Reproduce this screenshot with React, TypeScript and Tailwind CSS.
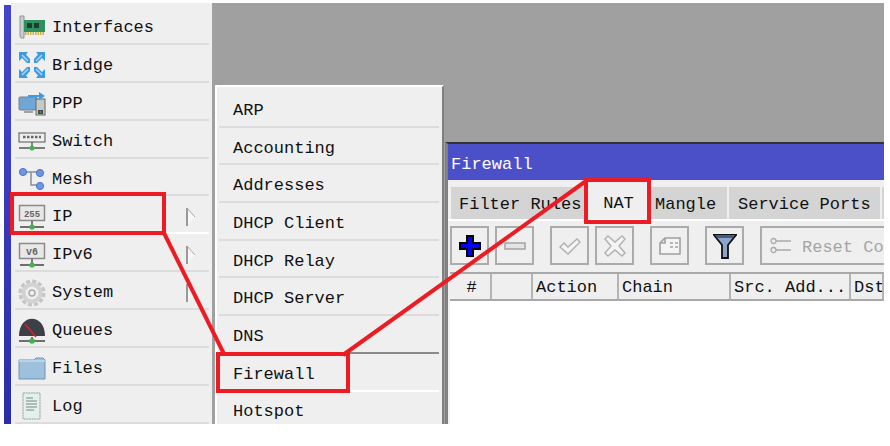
function ScreenIcon({ label, size = 9 }: { label: string; size?: number }) {
  return (
    <svg width="28" height="28" viewBox="0 0 28 28">
      <rect x="1.5" y="2.5" width="25" height="15" fill="#e8e8e8" stroke="#8a8a8a" strokeWidth="1.5" />
      <text x="14" y="14" textAnchor="middle" fontSize={size} fontFamily="Liberation Mono" fontWeight="bold" fill="#666">
        {label}
      </text>
      <path d="M14 18v5" stroke="#555" strokeWidth="1.5" />
      <path d="M2 24h24" stroke="#444" strokeWidth="1.5" />
      <circle cx="14" cy="24" r="2.6" fill="#3fb54a" />
    </svg>
  )
}

function InterfacesIcon() {
  return (
    <svg width="28" height="28" viewBox="0 0 28 28">
      <path d="M2 3h4v22H3l-1-2z" fill="#c9cfcf" stroke="#8f9696" />
      <rect x="6" y="7" width="21" height="12" fill="#2f8f5f" />
      <rect x="9" y="10" width="5" height="5" fill="#173f2c" />
      <rect x="16" y="10" width="5" height="5" fill="#173f2c" />
      <path d="M7 20.5h19" stroke="#c9b24a" strokeWidth="3" strokeDasharray="1.5 1" />
    </svg>
  )
}

function BridgeIcon() {
  return (
    <svg width="28" height="28" viewBox="0 0 28 28">
      <g fill="#3c9be3">
        <path d="M1 1h9L8 3.5 12 8v4H9L4 7 1 10z" />
        <path d="M27 1h-9l2 2.5L16 8v4h3l5-5 3 3z" />
        <path d="M1 27h9l-2-2.5 4-4.5v-4H9l-5 5-3-3z" />
        <path d="M27 27h-9l2-2.5-4-4.5v-4h3l5 5 3-3z" />
      </g>
      <g stroke="#a9d6f5" strokeWidth="1.5">
        <path d="M4 4l6 6M24 4l-6 6M4 24l6-6M24 24l-6-6" />
      </g>
    </svg>
  )
}

function PppIcon() {
  return (
    <svg width="28" height="28" viewBox="0 0 28 28">
      <rect x="1" y="8" width="18" height="13" rx="1" fill="#6ea6d6" stroke="#77838c" />
      <path d="M6 22h9v2H6z" fill="#9aa3a8" />
      <rect x="18" y="10" width="9" height="16" fill="#c5c9c9" stroke="#666" />
      <rect x="20" y="21" width="5" height="4" fill="#444" />
      <circle cx="22.5" cy="23" r="1" fill="#4caf50" />
      <path d="M10 6h11V3l6 4-6 4V8H10z" fill="#3c9be3" />
    </svg>
  )
}

function SwitchIcon() {
  return (
    <svg width="28" height="28" viewBox="0 0 28 28">
      <rect x="1" y="6" width="26" height="9" fill="#efefef" stroke="#777" strokeWidth="1.3" />
      <path d="M5 10h18" stroke="#666" strokeWidth="2.5" strokeDasharray="2.5 1.5" />
      <path d="M14 15v6" stroke="#666" strokeWidth="1.5" />
      <path d="M1 21h26" stroke="#555" strokeWidth="1.5" />
      <circle cx="14" cy="21" r="2.5" fill="#3fb54a" />
    </svg>
  )
}

function MeshIcon() {
  return (
    <svg width="28" height="28" viewBox="0 0 28 28">
      <path d="M5 7h8v13h10M13 7h10" stroke="#8a8f94" strokeWidth="1.5" fill="none" />
      <circle cx="5" cy="7" r="3.6" fill="#7195e4" stroke="#4f74cc" />
      <circle cx="22" cy="8" r="3.6" fill="#7195e4" stroke="#4f74cc" />
      <circle cx="22" cy="21" r="3.6" fill="#7195e4" stroke="#4f74cc" />
    </svg>
  )
}

function SystemIcon() {
  return (
    <svg width="28" height="28" viewBox="0 0 28 28">
      <circle cx="14" cy="14" r="11.5" fill="none" stroke="#c6c6c6" strokeWidth="4" strokeDasharray="4 2" />
      <circle cx="14" cy="14" r="8.5" fill="none" stroke="#d2d2d2" strokeWidth="4" />
      <circle cx="14" cy="14" r="3" fill="#efefef" stroke="#aaa" strokeWidth="1.5" />
    </svg>
  )
}

function QueuesIcon() {
  return (
    <svg width="28" height="28" viewBox="0 0 28 28">
      <path d="M1 19C1 -4 27 -4 27 19z" fill="#3c4148" />
      <path d="M7 7l11 13" stroke="#e11d2a" strokeWidth="1.5" />
      <path d="M14 20v4" stroke="#444" strokeWidth="1.5" />
      <path d="M1 24h26" stroke="#444" strokeWidth="1.5" />
      <circle cx="14" cy="24" r="2.8" fill="#3fb54a" />
    </svg>
  )
}

function FilesIcon() {
  return (
    <svg width="28" height="28" viewBox="0 0 28 28">
      <path d="M1 6h15l2-2h7l2 2v19H1z" fill="#9dc0dc" stroke="#6d95b5" />
      <path d="M1 7h26" stroke="#c4dcec" strokeWidth="1.5" />
    </svg>
  )
}

function LogIcon() {
  return (
    <svg width="28" height="28" viewBox="0 0 28 28">
      <rect x="5" y="1" width="17" height="26" fill="#e4f0ec" stroke="#8fa39c" strokeDasharray="2 0.6" />
      <path d="M8 6h7M8 9h11M8 12h11M8 15h11M8 18h8" stroke="#9aaaa5" strokeWidth="1.5" />
    </svg>
  )
}

const sideItems = [
  { label: "Interfaces", icon: <InterfacesIcon /> },
  { label: "Bridge", icon: <BridgeIcon /> },
  { label: "PPP", icon: <PppIcon /> },
  { label: "Switch", icon: <SwitchIcon /> },
  { label: "Mesh", icon: <MeshIcon /> },
  { label: "IP", icon: <ScreenIcon label="255" />, arrow: true, active: true },
  { label: "IPv6", icon: <ScreenIcon label="v6" size={10} />, arrow: true },
  { label: "System", icon: <SystemIcon />, arrow: true },
  { label: "Queues", icon: <QueuesIcon /> },
  { label: "Files", icon: <FilesIcon /> },
  { label: "Log", icon: <LogIcon /> },
]

const subItems = ["ARP", "Accounting", "Addresses", "DHCP Client", "DHCP Relay", "DHCP Server", "DNS", "Firewall", "Hotspot"]

function Arrow() {
  return (
    <svg width="12" height="20" viewBox="0 0 12 20" className="ml-auto mr-[12px]">
      <path d="M2 1v18l8-9z" fill="#f7f7f7" />
      <path d="M2 1v18" stroke="#999" strokeWidth="2" />
      <path d="M2 1l8 9" stroke="#aaa" strokeWidth="1" />
    </svg>
  )
}

function Sidebar() {
  return (
    <div className="flex h-full w-[208px] shrink-0">
      <div className="mt-[2px] w-[7px] bg-gradient-to-b from-[#4444cc] to-[#2c2ca8]" />
      <div className="flex-1 bg-[#efefef] pt-[4px] pl-[4px] pr-[3px]">
        {sideItems.map((item) => (
          <div
            key={item.label}
            className={`flex h-[37.9px] items-center border-b-2 pt-[5px] ${item.active ? "border-[#ffffff]" : "border-[#dcdcdc]"}`}
          >
            <div className="ml-[3px] mr-[6px] flex w-[28px] justify-center">{item.icon}</div>
            <span>{item.label}</span>
            {item.arrow && <Arrow />}
          </div>
        ))}
      </div>
    </div>
  )
}

function SubMenu() {
  return (
    <div className="absolute left-[3px] top-[82px] bottom-0 w-[229px] overflow-hidden border-l-2 border-t-2 border-r-2 border-l-white border-t-white border-r-[#808080] bg-[#efefef] pl-[2px] pr-[3px] pt-[3px]">
      {subItems.map((item) => (
        <div
          key={item}
          className={`flex h-[37.7px] shrink-0 items-center border-b-2 pl-[14px] pt-[5px] ${
            item === "Firewall" ? "border-white" : item === "DNS" ? "border-[#8a8a8a]" : "border-[#dcdcdc]"
          }`}
        >
          {item}
        </div>
      ))}
    </div>
  )
}

function ToolButton({ children, className = "" }: { children: React.ReactNode; className?: string }) {
  return (
    <div className={`flex h-[39px] w-[39px] shrink-0 items-center justify-center border-2 border-[#ababab] bg-[#efefef] ${className}`}>
      {children}
    </div>
  )
}

function Toolbar() {
  return (
    <div className="mt-[5px] flex h-[39px] pl-[2px]">
      <ToolButton>
        <svg width="24" height="24" viewBox="0 0 24 24">
          <path d="M9 2h6v7h7v6h-7v7H9v-7H2V9h7z" fill="#0000f0" stroke="#000" strokeWidth="2" />
        </svg>
      </ToolButton>
      <ToolButton className="ml-[6px]">
        <svg width="24" height="10" viewBox="0 0 24 10">
          <rect x="2" y="2" width="20" height="6" fill="#e4e4e4" stroke="#a8a8a8" strokeWidth="1.6" />
        </svg>
      </ToolButton>
      <ToolButton className="ml-[16px]">
        <svg width="24" height="24" viewBox="0 0 24 24">
          <path d="M2 13l4-4 4 4 9-8 3 3-12 12z" fill="#f4f4f4" stroke="#b0b0b0" strokeWidth="1.4" />
        </svg>
      </ToolButton>
      <ToolButton className="ml-[6px]">
        <svg width="22" height="22" viewBox="0 0 22 22">
          <path d="M4 1l7 6 7-6 3 3-6 7 6 7-3 3-7-6-7 6-3-3 6-7-6-7z" fill="#f4f4f4" stroke="#b0b0b0" strokeWidth="1.4" />
        </svg>
      </ToolButton>
      <ToolButton className="ml-[16px]">
        <svg width="24" height="20" viewBox="0 0 24 20">
          <path d="M7 2h15v16H2V7z" fill="#f4f4f4" stroke="#a0a0a0" strokeWidth="1.6" />
          <path d="M2 7h5V2M12 7h3M17 7h3M12 11h3M17 11h3" stroke="#a0a0a0" strokeWidth="1.6" fill="none" />
        </svg>
      </ToolButton>
      <ToolButton className="ml-[16px]">
        <svg width="24" height="26" viewBox="0 0 24 26">
          <path d="M1 2h22l-8 10v13H9V12z" fill="#8ea3cc" stroke="#111" strokeWidth="1.8" />
          <path d="M2 2h20l-2 3H4z" fill="#445a80" />
        </svg>
      </ToolButton>
      <div className="ml-[16px] flex h-[39px] flex-1 items-center gap-[10px] border-2 border-r-0 border-[#ababab] bg-[#efefef] pl-[8px] text-[#a4a4a4] whitespace-nowrap overflow-hidden">
        <svg width="22" height="18" viewBox="0 0 22 18" className="shrink-0">
          <circle cx="3.5" cy="4" r="2.5" fill="none" stroke="#aaa" strokeWidth="1.3" />
          <circle cx="3.5" cy="13" r="2.5" fill="none" stroke="#aaa" strokeWidth="1.3" />
          <path d="M6 4h15M6 13h15" stroke="#aaa" strokeWidth="1.4" />
        </svg>
        <span className="pt-[3px]">Reset Counters</span>
      </div>
    </div>
  )
}

const columns = [
  { label: "#", width: "w-[42px]", center: true },
  { label: "", width: "w-[41px]" },
  { label: "Action", width: "w-[86px]" },
  { label: "Chain", width: "w-[112px]" },
  { label: "Src. Add...", width: "w-[120px]" },
  { label: "Dst", width: "flex-1" },
]

function FirewallWindow() {
  return (
    <div className="absolute left-[233px] right-0 top-[139px] bottom-0 flex flex-col overflow-hidden border-l-[3px] border-t-2 border-l-[#808080] border-t-[#333] bg-[#efefef]">
      <div className="flex h-[36px] shrink-0 items-center bg-[#4b50c9] pl-[3px] pt-[5px] text-white">Firewall</div>
      <div className="mt-[7px] flex h-[32px] shrink-0 pl-[3px]">
        <div className="flex w-[133px] items-center bg-[#d4d4d4] pl-[8px] pt-[2px] whitespace-nowrap">Filter Rules</div>
        <div className="ml-[3px] flex w-[60px] items-center justify-center bg-[#efefef] pl-[3px]">NAT</div>
        <div className="ml-[3px] flex w-[77px] items-center bg-[#d4d4d4] pl-[5px] pt-[2px]">Mangle</div>
        <div className="ml-[2px] flex w-[151px] items-center bg-[#d4d4d4] pl-[9px] pt-[2px] whitespace-nowrap">Service Ports</div>
        <div className="ml-[2px] flex-1 bg-[#d4d4d4]" />
      </div>
      <div className="h-[2px] shrink-0 bg-white" />
      <Toolbar />
      <div className="mt-[7px] flex h-[29px] shrink-0 ml-[2px] border-t-2 border-b-2 border-[#a8a8a8]">
        {columns.map((col) => (
          <div
            key={col.label || "blank"}
            className={`${col.width} flex shrink-0 items-center overflow-hidden whitespace-nowrap border-r-2 border-[#b4b4b4] pl-[3px] pt-[2px] ${col.center ? "justify-center" : ""}`}
          >
            {col.label}
          </div>
        ))}
      </div>
      <div className="ml-[2px] flex-1 bg-white" />
    </div>
  )
}

function Annotations() {
  return (
    <svg width="890" height="446" viewBox="0 0 890 446" className="absolute left-0 top-0 pointer-events-none">
      <g fill="none" stroke="#ed1c24" strokeWidth="4">
        <rect x="12" y="194" width="152" height="39" />
        <rect x="218" y="354" width="130" height="37" />
        <rect x="586" y="180" width="63" height="42" />
        <path d="M164 233L224 354" />
        <path d="M343 355L586 181" />
      </g>
    </svg>
  )
}

export default function App() {
  return (
    <div className="relative h-[446px] w-[890px] overflow-hidden bg-white font-['Liberation_Mono',monospace] text-[17px] leading-none text-[#111]">
      <div className="ml-[4px] mt-[3px] flex h-[421px] w-[880px]">
        <Sidebar />
        <div className="relative flex-1 bg-[#a0a0a0]">
          <SubMenu />
          <FirewallWindow />
        </div>
      </div>
      <Annotations />
    </div>
  )
}
